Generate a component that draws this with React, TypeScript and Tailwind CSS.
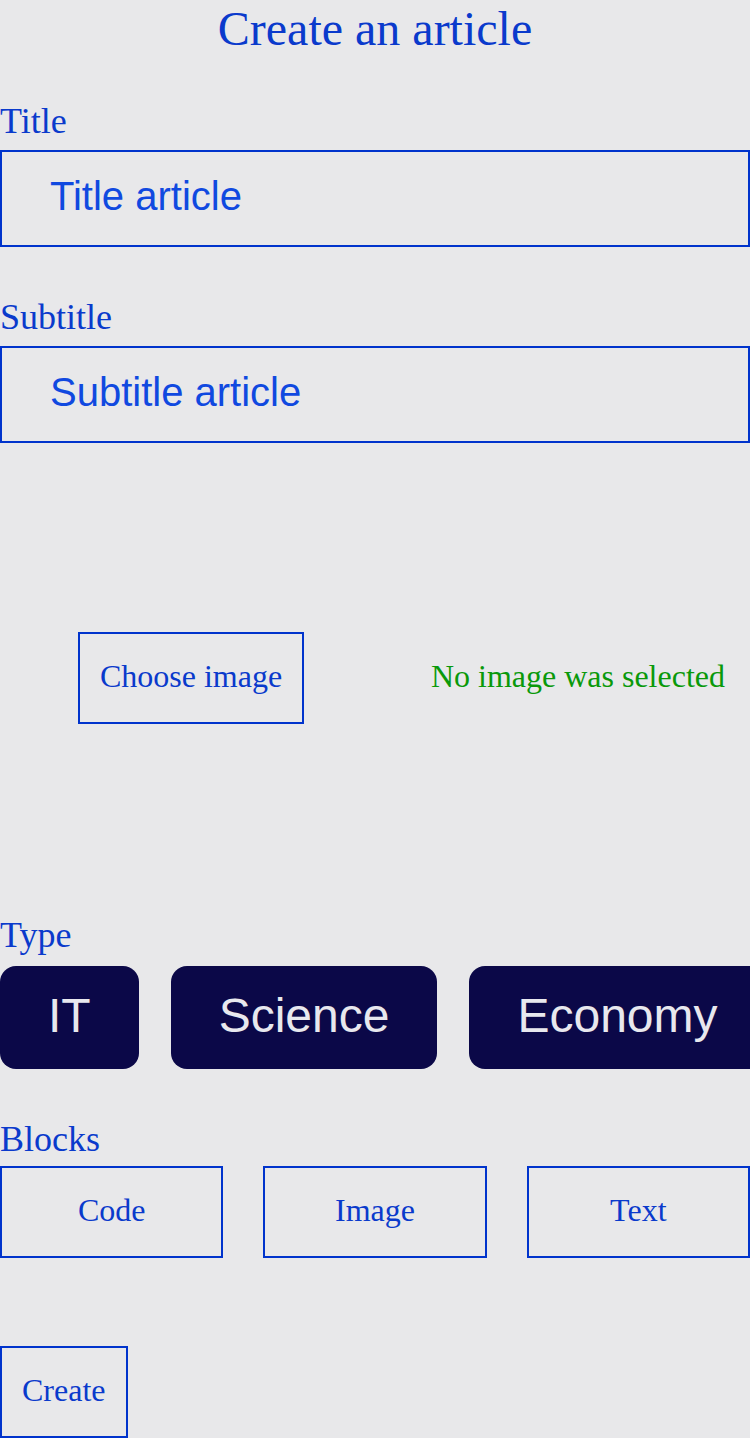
import React from 'react';

const serif = "font-['Liberation_Serif',serif]";
const sans = "font-['Liberation_Sans',sans-serif]";

const types = ['IT', 'Science', 'Economy'];
const blocks = ['Code', 'Image', 'Text'];

export default function App() {
  return (
    <main className={`min-h-screen w-[750px] overflow-hidden bg-[#e8e8ea] text-[#0a3acc] ${serif}`}>
      <h1 className="pt-[1px] text-center text-[48px] leading-[55px]">Create an article</h1>

      <section className="mt-[45px]">
        <label className="block text-[36px] leading-[41px]">Title</label>
        <div className="mt-[8px] flex h-[97px] items-center border-2 border-[#0033cc] pb-[5px] pl-[48px]">
          <span className={`${sans} text-[40px] text-[#1049e0]`}>Title article</span>
        </div>
      </section>

      <section className="mt-[50px]">
        <label className="block text-[36px] leading-[41px]">Subtitle</label>
        <div className="mt-[8px] flex h-[97px] items-center border-2 border-[#0033cc] pb-[5px] pl-[48px]">
          <span className={`${sans} text-[40px] text-[#1049e0]`}>Subtitle article</span>
        </div>
      </section>

      <section className="flex h-[470px] items-center">
        <button className="ml-[78px] flex h-[92px] w-[226px] items-center justify-center border-2 border-[#0033cc] pb-[5px] text-[32px]">
          Choose image
        </button>
        <span className="mb-[5px] ml-auto mr-[25px] text-[32px] text-[#0a990a]">No image was selected</span>
      </section>

      <section className="mt-[2px]">
        <label className="block text-[36px] leading-[41px]">Type</label>
        <div className="mt-[10px] flex gap-[32px]">
          {types.map((t) => (
            <button
              key={t}
              className={`${sans} flex h-[103px] shrink-0 items-center rounded-[16px] bg-[#0b0848] px-[48px] pb-[4px] text-[48px] text-[#e8e8ee]`}
            >
              {t}
            </button>
          ))}
        </div>
      </section>

      <section className="mt-[50px]">
        <label className="block text-[36px] leading-[41px]">Blocks</label>
        <div className="mt-[6px] grid grid-cols-3 gap-[40px]">
          {blocks.map((b) => (
            <button
              key={b}
              className="flex h-[92px] items-center justify-center border-2 border-[#0033cc] pb-[4px] text-[32px]"
            >
              {b}
            </button>
          ))}
        </div>
      </section>

      <button className="mt-[88px] flex h-[92px] items-center border-2 border-[#0033cc] px-[20px] pb-[5px] text-[32px]">
        Create
      </button>
    </main>
  );
}
